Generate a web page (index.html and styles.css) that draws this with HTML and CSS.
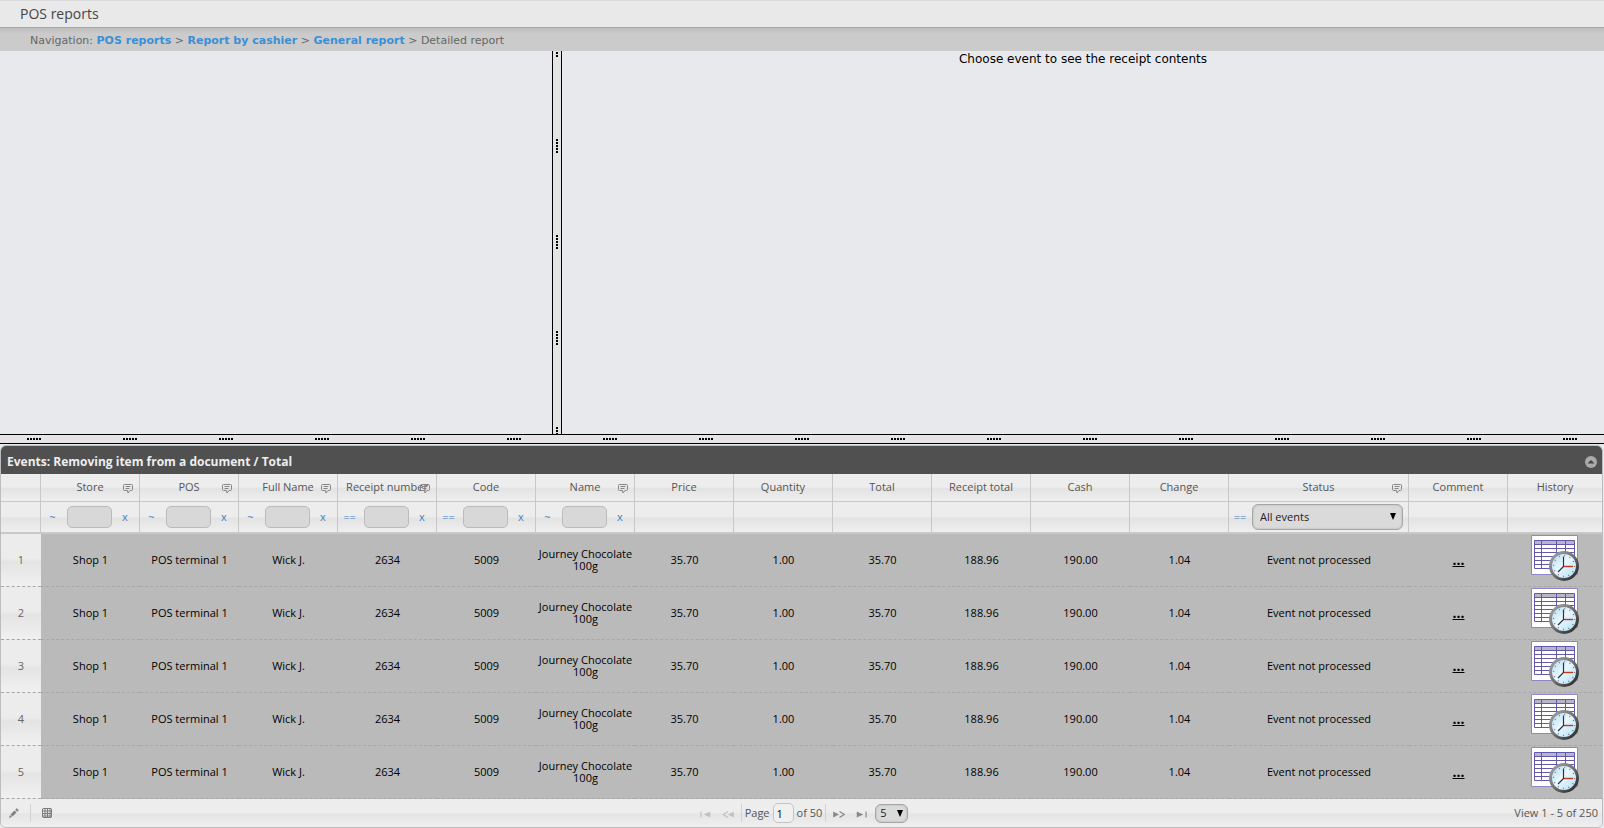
FILE: index.html
```html
<!DOCTYPE html>
<html lang="en">
<head>
<meta charset="utf-8">
<title>POS reports</title>
<link rel="stylesheet" href="styles.css">
</head>
<body>
<svg class="defs" aria-hidden="true">
  <defs>
    <pattern id="grip-h" width="96" height="8" patternUnits="userSpaceOnUse">
      <path d="M27 3h2v2h-2zM30 3h2v2h-2zM33 3h2v2h-2zM36 3h2v2h-2zM39 3h2v2h-2z"/>
    </pattern>
    <pattern id="grip-v" width="8" height="96" patternUnits="userSpaceOnUse" y="-8">
      <path d="M3 0h2v2h-2zM3 3h2v2h-2zM3 6h2v2h-2zM3 9h2v2h-2zM3 12h2v2h-2z"/>
    </pattern>
    <linearGradient id="rim" x1="0" y1="0" x2="1" y2="1">
      <stop offset="0" stop-color="#a4a4a4"/><stop offset=".45" stop-color="#777"/><stop offset="1" stop-color="#222"/>
    </linearGradient>
    <linearGradient id="face" x1="0" y1="0" x2="1" y2="1">
      <stop offset="0" stop-color="#a9d8f2"/><stop offset=".45" stop-color="#ebf7fe"/><stop offset="1" stop-color="#aadcf5"/>
    </linearGradient>
    <symbol id="note" viewBox="0 0 10 10">
      <path d="M1.5.5h7a1 1 0 0 1 1 1v4a1 1 0 0 1-1 1H7L5 9 4.500 6.500h-3a1 1 0 0 1-1-1v-4a1 1 0 0 1 1-1zM2.500 2.500h5M2.500 4.500h4" fill="none" stroke="#858585"/>
    </symbol>
    <symbol id="history" viewBox="0 0 48 46">
      <path d="M.5.5h46v39H.5z" fill="#fff" stroke="#9186c6"/>
      <path d="M3.500 5.500h40v4h-40z" fill="#b6b6c8"/>
      <path d="M3.500 5.500h40v28h-40zM3.500 9.500h40M3.500 13.500h40M3.500 17.500h40M3.500 21.500h40M3.500 25.500h40M3.500 29.500h40M10.500 5.500v28M25.500 5.500v28M34.500 5.500v28" fill="none" stroke="#6259ae"/>
      <circle cx="33" cy="31" r="13.500" fill="url(#face)" stroke="url(#rim)" stroke-width="3"/>
      <circle cx="33" cy="31" r="10.500" fill="none" stroke="#5b7386" stroke-width="1.400" stroke-dasharray=".9 4.598"/>
      <path d="M32.500 31V21.500M33 31l-6 6" fill="none" stroke="#24354a" stroke-width="1.200"/>
      <path d="M33 31.500h9" stroke="#bf3b20" stroke-width="1.400"/>
    </symbol>
  </defs>
</svg>

<header class="title"><h1>POS reports</h1></header>
<nav class="crumbs" aria-label="Breadcrumb">Navigation: <a href="#">POS reports</a> &gt; <a href="#">Report by cashier</a> &gt; <a href="#">General report</a> &gt; Detailed report</nav>

<main class="workspace">
  <div class="panes">
    <section class="pane"></section>
    <div class="split-v" role="separator" aria-orientation="vertical"><svg><rect width="100%" height="100%" fill="url(#grip-v)"/></svg></div>
    <section class="pane receipt">Choose event to see the receipt contents</section>
  </div>
  <div class="split-h" role="separator"><svg><rect width="100%" height="100%" fill="url(#grip-h)"/></svg></div>

  <section class="grid">
    <div class="caption">
      <h2>Events: Removing item from a document / Total</h2>
      <button class="collapse" aria-label="Collapse"><svg viewBox="0 0 12 12"><circle cx="6" cy="6" r="6" fill="#aaa"/><path d="M2.500 7.500L6 4l3.500 3.500z" fill="#444"/></svg></button>
    </div>
    <table>
      <colgroup>
        <col class="c-num"><col><col><col><col><col><col><col><col><col><col><col><col><col class="c-status"><col><col class="c-history">
      </colgroup>
      <thead>
        <tr class="heads">
          <th></th>
          <th>Store<svg class="note"><use href="#note"/></svg></th>
          <th>POS<svg class="note"><use href="#note"/></svg></th>
          <th>Full Name<svg class="note"><use href="#note"/></svg></th>
          <th>Receipt number<svg class="note"><use href="#note"/></svg></th>
          <th>Code</th>
          <th>Name<svg class="note"><use href="#note"/></svg></th>
          <th>Price</th><th>Quantity</th><th>Total</th><th>Receipt total</th><th>Cash</th><th>Change</th>
          <th>Status<svg class="note"><use href="#note"/></svg></th>
          <th>Comment</th><th>History</th>
        </tr>
        <tr class="filters">
          <td></td>
          <td><div class="filter"><a href="#">~</a><input type="text" aria-label="Store"><a href="#">x</a></div></td>
          <td><div class="filter"><a href="#">~</a><input type="text" aria-label="POS"><a href="#">x</a></div></td>
          <td><div class="filter"><a href="#">~</a><input type="text" aria-label="Full Name"><a href="#">x</a></div></td>
          <td><div class="filter"><a href="#">==</a><input type="text" aria-label="Receipt number"><a href="#">x</a></div></td>
          <td><div class="filter"><a href="#">==</a><input type="text" aria-label="Code"><a href="#">x</a></div></td>
          <td><div class="filter"><a href="#">~</a><input type="text" aria-label="Name"><a href="#">x</a></div></td>
          <td></td><td></td><td></td><td></td><td></td><td></td>
          <td><div class="filter choice"><a href="#">==</a><span class="drop"><select aria-label="Status"><option>All events</option></select><svg viewBox="0 0 6 7"><path d="M0 0h6L3 7z"/></svg></span></div></td>
          <td></td><td></td>
        </tr>
      </thead>
      <tbody>
        <tr><th>1</th><td>Shop 1</td><td>POS terminal 1</td><td>Wick J.</td><td>2634</td><td>5009</td><td>Journey Chocolate 100g</td><td>35.70</td><td>1.00</td><td>35.70</td><td>188.96</td><td>190.00</td><td>1.04</td><td>Event not processed</td><td><a href="#">...</a></td><td class="hist"><button aria-label="History"><svg><use href="#history"/></svg></button></td></tr>
        <tr><th>2</th><td>Shop 1</td><td>POS terminal 1</td><td>Wick J.</td><td>2634</td><td>5009</td><td>Journey Chocolate 100g</td><td>35.70</td><td>1.00</td><td>35.70</td><td>188.96</td><td>190.00</td><td>1.04</td><td>Event not processed</td><td><a href="#">...</a></td><td class="hist"><button aria-label="History"><svg><use href="#history"/></svg></button></td></tr>
        <tr><th>3</th><td>Shop 1</td><td>POS terminal 1</td><td>Wick J.</td><td>2634</td><td>5009</td><td>Journey Chocolate 100g</td><td>35.70</td><td>1.00</td><td>35.70</td><td>188.96</td><td>190.00</td><td>1.04</td><td>Event not processed</td><td><a href="#">...</a></td><td class="hist"><button aria-label="History"><svg><use href="#history"/></svg></button></td></tr>
        <tr><th>4</th><td>Shop 1</td><td>POS terminal 1</td><td>Wick J.</td><td>2634</td><td>5009</td><td>Journey Chocolate 100g</td><td>35.70</td><td>1.00</td><td>35.70</td><td>188.96</td><td>190.00</td><td>1.04</td><td>Event not processed</td><td><a href="#">...</a></td><td class="hist"><button aria-label="History"><svg><use href="#history"/></svg></button></td></tr>
        <tr><th>5</th><td>Shop 1</td><td>POS terminal 1</td><td>Wick J.</td><td>2634</td><td>5009</td><td>Journey Chocolate 100g</td><td>35.70</td><td>1.00</td><td>35.70</td><td>188.96</td><td>190.00</td><td>1.04</td><td>Event not processed</td><td><a href="#">...</a></td><td class="hist"><button aria-label="History"><svg><use href="#history"/></svg></button></td></tr>
      </tbody>
    </table>
    <footer class="pager">
      <div class="tools">
        <button aria-label="Edit"><svg viewBox="0 0 10 10"><path d="M0 10l1-3 2 2zM1.500 6.500L5.500 2.500l2 2-4 4zM6.200 1.800L7 1l1-1 .6 1.400L10 2 9 3l-.8.8z" fill="#808080"/></svg></button>
        <span class="sep"></span>
        <button aria-label="Columns"><svg viewBox="0 0 10 10"><path d="M1 .5h8l.5.500v8l-.5.500H1l-.5-.500V1zM.5 3h9M.5 5.500h9M.5 8h9M3 .5v9M5.500 .5v9M8 .5v9" fill="none" stroke="#7c7c7c"/></svg></button>
      </div>
      <div class="pages">
        <button class="dim" aria-label="First page"><svg viewBox="0 0 10 6"><path d="M1 .5h1v5H1zM9.500 .5v5L4 3z" fill="#888"/></svg></button>
        <button class="dim" aria-label="Previous page"><svg viewBox="0 0 10 6"><path d="M5 .5L1 3l4 2.500" fill="none" stroke="#888"/><path d="M10 .5v5L5 3z" fill="#888"/></svg></button>
        <span class="sep"></span>
        <label for="page">Page</label><input id="page" type="text" value="1"><span>of 50</span>
        <span class="sep"></span>
        <button aria-label="Next page"><svg viewBox="0 0 10 6"><path d="M0 .5v5L5 3z" fill="#888"/><path d="M5.500 .5L9.500 3l-4 2.500" fill="none" stroke="#888"/></svg></button>
        <button aria-label="Last page"><svg viewBox="0 0 10 6"><path d="M8 .5h1v5H8zM.5.5v5L6 3z" fill="#888"/></svg></button>
        <span class="drop small"><select aria-label="Rows per page"><option>5</option></select><svg viewBox="0 0 6 7"><path d="M0 0h6L3 7z"/></svg></span>
      </div>
      <div class="summary">View 1 - 5 of 250</div>
    </footer>
  </section>
</main>
</body>
</html>
```
FILE: styles.css
```css
* { box-sizing: border-box; }

body {
  margin: 0;
  min-height: 100vh;
  display: flex;
  flex-direction: column;
  background: #e8e9ed;
  color: #000;
  font: 11px/12px "Open Sans", "Noto Sans", sans-serif;
}

button { padding: 0; border: 0; background: none; display: block; }
svg { display: block; }
.defs { position: absolute; width: 0; height: 0; }

.title {
  height: 28px;
  padding: 2px 20px 0;
  border-top: 1px solid #d9d9d9;
  border-bottom: 1px solid #a8a8a8;
  background: #e9e9e9;
}
.title h1 { margin: 0; font-size: 14px; line-height: 22px; font-weight: 400; color: #444; }

.crumbs {
  height: 23px;
  padding: 0 30px;
  background: linear-gradient(#bdbdbd, #cbcbcb 6px);
  color: #666;
  font: 11px/26px "DejaVu Sans", sans-serif;
}
.crumbs a { color: #3b8fd6; font-weight: 700; text-decoration: none; }

.workspace { flex: 1; display: flex; flex-direction: column; }
.panes { flex: 1; display: grid; grid-template-columns: 552fr 10px 1042fr; }
.receipt { text-align: center; font: 12px/17px "DejaVu Sans", sans-serif; }
.split-v { position: relative; border: solid #000; border-width: 0 1px; background: #e4e4e4; }
.split-v svg { position: absolute; inset: 0; width: 100%; height: 100%; }
.split-h { height: 10px; border: solid #000; border-width: 1px 0; background: #e5e3e5; }
.split-h svg { width: 100%; height: 8px; }

.grid {
  margin: 1px 1px 0 0;
  border: 1px solid #bdbdbd;
  border-radius: 6px;
  background: #ebebeb;
  overflow: hidden;
}
.caption {
  height: 28px;
  display: flex;
  align-items: center;
  justify-content: space-between;
  padding: 3px 5px 0 6px;
  background: #505050;
}
.caption h2 { margin: 0; color: #eee; font-size: 12px; line-height: 16px; font-weight: 700; }
.collapse svg { width: 12px; height: 12px; }

table { width: 100%; table-layout: fixed; border-collapse: separate; border-spacing: 0; }
col { width: 99px; }
.c-num { width: 40px; }
.c-status { width: 180px; }
.c-history { width: 94px; }
th, td { padding: 0; font-weight: 400; text-align: center; vertical-align: middle; }

thead th, thead td {
  border-right: 1px solid #c8c8c8;
  border-bottom: 1px solid #c8c8c8;
  background: linear-gradient(#ededed 48%, #e3e3e3 54%, #efefef);
}
thead tr > :last-child { border-right: 0; }
.heads th { position: relative; height: 28px; padding-bottom: 2px; color: #555; white-space: nowrap; }
.filters td { height: 32px; border-bottom: 2px solid #c8c8c8; }
.note { position: absolute; right: 6px; top: 10px; width: 10px; height: 10px; }

.filter {
  display: grid;
  grid-template-columns: 20px minmax(0, 1fr) 20px;
  align-items: center;
  padding: 0 5px 0 1px;
  column-gap: 4px;
}
.filter a { color: #3f7fbf; text-decoration: none; }
.filter.choice { grid-template-columns: 20px minmax(0, 1fr); column-gap: 2px; }
.filter input {
  width: 100%;
  height: 22px;
  border: 1px solid #bbb;
  border-radius: 5px;
  background: #d8d8d8;
}
.filter input + a { margin-left: -2px; }
.filter:not(.choice) { padding-left: 1px; padding-right: 3px; grid-template-columns: 21px minmax(0, 1fr) 20px; }

.drop { position: relative; display: block; }
.drop select {
  appearance: none;
  width: 100%;
  height: 26px;
  padding: 0 7px;
  border: 1px solid #a6a6a6;
  border-radius: 6px;
  background: #dadada;
  box-shadow: inset 0 0 2px #aaa;
  color: #222;
  font: inherit;
}
.drop svg { position: absolute; right: 7px; top: 9px; width: 6px; height: 7px; pointer-events: none; }

tbody th, tbody td { height: 53px; border-bottom: 1px dashed #a8a8a8; }
tbody th { background: linear-gradient(#ececec 46%, #e4e4e4 54%, #f0f0f0); color: #666; }
tbody td { background: #bababa; }
tbody a { color: #000; font-size: 14px; font-weight: 700; }
.hist { vertical-align: top; }
.hist button { margin: 1px auto 0; }
.hist svg { width: 48px; height: 46px; }

.pager {
  height: 28px;
  display: grid;
  grid-template-columns: 1fr auto 1fr;
  align-items: center;
  background: linear-gradient(#ededed 48%, #e5e5e5 54%, #efefef);
  color: #555;
}
.tools, .pages { display: flex; align-items: center; }
.tools { padding-left: 8px; gap: 11px; }
.tools svg { width: 10px; height: 10px; }
.sep { width: 1px; height: 18px; background: #d2d2d2; }
.pages { gap: 3px; }
.pages button { padding: 2px 4px 0; }
.pages button svg { width: 12px; height: 7px; }
.pages .dim { opacity: .4; }
.pages input {
  width: 21px;
  height: 20px;
  padding: 0 3px;
  border: 1px solid #c4c4c4;
  border-radius: 5px;
  background: #f0f0f0;
  font: inherit;
}
.small { width: 33px; }
.small select { height: 19px; padding: 0 4px; }
.small svg { top: 6px; right: 5px; }
.summary { padding-right: 4px; text-align: right; }
```
